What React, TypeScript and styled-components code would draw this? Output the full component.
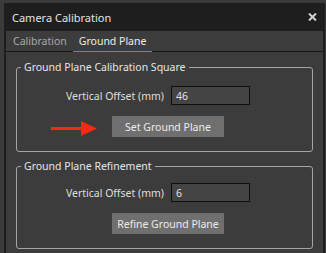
import React from "react";
import styled, { createGlobalStyle } from "styled-components";

const GlobalStyle = createGlobalStyle`
  html, body { margin: 0; padding: 0; background: #3a3a3a; }
  body { font-family: "Noto Sans", "Open Sans", sans-serif; }
`;

const Page = styled.div`
  padding: 3px 1px 0 4px;
  height: 253px;
  box-sizing: border-box;
  overflow: hidden;
`;

const Window = styled.div`
  background: #1e1e1e;
  display: flex;
  flex-direction: column;
  height: 250px;
`;

const TitleBar = styled.div`
  height: 28px;
  display: flex;
  align-items: center;
  justify-content: space-between;
  padding: 0 8px 0 8px;
  color: #e4e4e4;
  font-size: 11px;
`;

const CloseButton = styled.button`
  background: none;
  border: none;
  padding: 0;
  width: 10px;
  height: 10px;
  display: flex;
  align-items: center;
  justify-content: center;
  cursor: pointer;
`;

const Body = styled.div`
  flex: 1;
  margin: 0 2px;
  background: #3c3c3c;
`;

const TabBar = styled.div`
  height: 20px;
  display: flex;
  padding-left: 1px;
  border-bottom: 1px solid #161616;
`;

const Tab = styled.div<{ $active?: boolean }>`
  padding: 0 6px;
  display: flex;
  align-items: center;
  font-size: 10.5px;
  color: ${(p) => (p.$active ? "#ececec" : "#a9a9a9")};
  border-bottom: 1px solid ${(p) => (p.$active ? "#3d8ede" : "transparent")};
  margin-bottom: -1px;
`;

const Content = styled.div`
  padding: 7px 10px 0 10px;
  display: flex;
  flex-direction: column;
  gap: 6px;
`;

const Group = styled.fieldset`
  margin: 0;
  padding: 0 0 14px 0;
  border: 1px solid #a4a4a4;
  border-radius: 3px;
  min-width: 0;
`;

const GroupTitle = styled.legend`
  margin-left: 4px;
  padding: 0 3px;
  font-size: 10.5px;
  line-height: 16px;
  color: #e6e6e6;
`;

const FieldRow = styled.div<{ $top: number }>`
  display: grid;
  grid-template-columns: 147px 79px;
  column-gap: 7px;
  align-items: center;
  margin-top: ${(p) => p.$top}px;
`;

const Label = styled.label`
  justify-self: end;
  font-size: 10.5px;
  color: #dedede;
  white-space: nowrap;
`;

const Input = styled.input`
  box-sizing: border-box;
  width: 79px;
  height: 19px;
  border: 1px solid #0e0e0e;
  background: #444444;
  color: #e2e2e2;
  padding: 0 4px;
  font-family: inherit;
  font-size: 10.5px;
  outline: none;
`;

const ButtonRow = styled.div<{ $indent: number }>`
  display: flex;
  align-items: flex-start;
  margin-top: 11px;
  padding-left: ${(p) => p.$indent}px;
`;

const Arrow = styled.svg`
  margin-top: 5px;
  margin-right: 14px;
  flex: none;
`;

const ActionButton = styled.button`
  width: 112px;
  height: 21px;
  border: none;
  background: #6f6f6f;
  color: #ececec;
  font-family: inherit;
  font-size: 10.5px;
  padding: 0;
  white-space: nowrap;
`;

export default function App() {
  return (
    <>
      <GlobalStyle />
      <Page>
        <Window>
          <TitleBar>
            <span>Camera Calibration</span>
            <CloseButton aria-label="Close">
              <svg width="9" height="8" viewBox="0 0 9 8">
                <path d="M1 0.5 L8 7.5 M8 0.5 L1 7.5" stroke="#d2d2d2" strokeWidth="2" />
              </svg>
            </CloseButton>
          </TitleBar>
          <Body>
            <TabBar>
              <Tab>Calibration</Tab>
              <Tab $active>Ground Plane</Tab>
            </TabBar>
            <Content>
              <Group>
                <GroupTitle>Ground Plane Calibration Square</GroupTitle>
                <FieldRow $top={11}>
                  <Label>Vertical Offset (mm)</Label>
                  <Input defaultValue="46" />
                </FieldRow>
                <ButtonRow $indent={34}>
                  <Arrow width="47" height="16" viewBox="0 0 47 16">
                    <rect x="0" y="6" width="32" height="3" fill="#f52a12" />
                    <polygon points="30,0 46,7.5 30,15" fill="#f52a12" />
                  </Arrow>
                  <ActionButton>Set Ground Plane</ActionButton>
                </ButtonRow>
              </Group>
              <Group>
                <GroupTitle>Ground Plane Refinement</GroupTitle>
                <FieldRow $top={9}>
                  <Label>Vertical Offset (mm)</Label>
                  <Input defaultValue="6" />
                </FieldRow>
                <ButtonRow $indent={95}>
                  <ActionButton>Refine Ground Plane</ActionButton>
                </ButtonRow>
              </Group>
            </Content>
          </Body>
        </Window>
      </Page>
    </>
  );
}
